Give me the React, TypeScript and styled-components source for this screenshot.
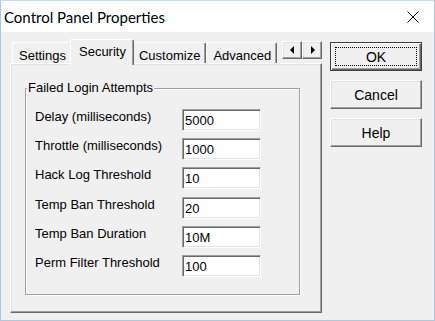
import React from 'react';
import styled, { createGlobalStyle } from 'styled-components';

const GlobalStyle = createGlobalStyle`
  html, body {
    margin: 0;
    padding: 0;
    background: #f0f0f0;
  }
  * {
    box-sizing: border-box;
  }
`;

const Window = styled.div`
  width: 435px;
  height: 321px;
  border: 1px solid #a6caec;
  border-top-color: #c9dcee;
  background: #f0f0f0;
  display: flex;
  flex-direction: column;
  font-family: 'Liberation Sans', Arial, sans-serif;
  color: #000;
`;

const TitleBar = styled.div`
  height: 31px;
  flex-shrink: 0;
  background: #fff;
  display: flex;
  align-items: center;
  justify-content: space-between;
  padding: 0 15px 0 3px;
`;

const Title = styled.span`
  font-family: Lato, 'Noto Sans', sans-serif;
  font-size: 15px;
  line-height: 20px;
  margin-top: 1px;
`;

const CloseButton = styled.span`
  display: flex;
  width: 12px;
  height: 12px;
  margin-top: 1px;
`;

const Body = styled.div`
  display: flex;
  padding: 7px 0 0 9px;
  gap: 8px;
`;

const TabControl = styled.div`
  width: 312px;
  display: flex;
  flex-direction: column;
`;

const TabStrip = styled.div`
  height: 24px;
  display: flex;
  position: relative;
  z-index: 1;
`;

const TabList = styled.div`
  flex: 1;
  height: 26px;
  display: flex;
  align-items: flex-start;
  padding-left: 2px;
  overflow: hidden;
`;

const Tab = styled.div<{ $active?: boolean }>`
  flex-shrink: 0;
  position: relative;
  height: ${(p) => (p.$active ? '26px' : '21px')};
  margin: ${(p) => (p.$active ? '0 -2px' : '3px 0 0')};
  z-index: ${(p) => (p.$active ? 2 : 1)};
  padding: ${(p) => (p.$active ? '4px 7px 0 8px' : '5px 5px 0 6px')};
  background: #f0f0f0;
  border-left: 1px solid #fff;
  border-top: 1px solid #fff;
  border-right: 1px solid #696969;
  box-shadow: inset -1px 0 0 #a0a0a0;
  border-top-left-radius: 2px;
  border-top-right-radius: 2px;
  font-size: 13px;
  line-height: 15px;
  white-space: nowrap;
`;

const Spinner = styled.div`
  display: flex;
  margin-top: 2px;
  height: 18px;
`;

const SpinButton = styled.div`
  width: 20px;
  height: 18px;
  display: flex;
  align-items: center;
  justify-content: center;
  background: #f0f0f0;
  border: 1px solid;
  border-color: #fff #696969 #696969 #fff;
  box-shadow: inset -1px -1px 0 #a0a0a0, inset 1px 1px 0 #e3e3e3;
`;

const Pane = styled.div`
  height: 250px;
  border: 1px solid;
  border-color: #fff #696969 #696969 #fff;
  box-shadow: inset -1px -1px 0 #a0a0a0, inset 1px 1px 0 #e3e3e3;
  padding: 24px 0 0 14px;
`;

const GroupBox = styled.div`
  position: relative;
  width: 275px;
  height: 207px;
  border: 1px solid #a0a0a0;
  box-shadow: inset 1px 1px 0 #fff, 1px 1px 0 #fff;
  padding: 20px 0 0 9px;
`;

const Legend = styled.span`
  position: absolute;
  top: -9px;
  left: 1px;
  padding: 0 1px;
  background: #f0f0f0;
  font-size: 13px;
  line-height: 16px;
`;

const FieldGrid = styled.div`
  display: grid;
  grid-template-columns: 147px 79px;
  grid-auto-rows: 22px;
  row-gap: 7.2px;
`;

const Label = styled.span`
  font-size: 13px;
  line-height: 16px;
  white-space: nowrap;
`;

const TextBox = styled.div`
  height: 22px;
  background: #fff;
  border: 1px solid;
  border-color: #a0a0a0 #fff #fff #a0a0a0;
  box-shadow: inset 1px 1px 0 #696969, inset -1px -1px 0 #e3e3e3;
  padding: 0 0 0 2px;
  font-size: 13px;
  line-height: 21px;
`;

const ButtonColumn = styled.div`
  display: flex;
  flex-direction: column;
  gap: 9px;
  padding-top: 3px;
`;

const Button = styled.div<{ $default?: boolean }>`
  position: relative;
  width: 92px;
  height: 29px;
  display: flex;
  align-items: center;
  justify-content: center;
  font-size: 14px;
  background: #f0f0f0;
  border: 1px solid;
  border-color: ${(p) => (p.$default ? '#3c3c3c' : '#fff #696969 #696969 #fff')};
  box-shadow: ${(p) =>
    p.$default
      ? 'inset 1px 1px 0 #fff, inset -1px -1px 0 #696969, inset -2px -2px 0 #a0a0a0'
      : 'inset -1px -1px 0 #a0a0a0, inset 1px 1px 0 #e3e3e3'};
`;

const FocusRing = styled.span`
  position: absolute;
  inset: 4px;
  border: 1px dotted #000;
`;

const fields = [
  ['Delay (milliseconds)', '5000'],
  ['Throttle (milliseconds)', '1000'],
  ['Hack Log Threshold', '10'],
  ['Temp Ban Threshold', '20'],
  ['Temp Ban Duration', '10M'],
  ['Perm Filter Threshold', '100'],
];

const App: React.FC = () => {
  return (
    <>
      <GlobalStyle />
      <Window>
        <TitleBar>
          <Title>Control Panel Properties</Title>
          <CloseButton>
            <svg width="12" height="12" viewBox="0 0 12 12">
              <path d="M0.5 0.5L11.5 11.5M11.5 0.5L0.5 11.5" stroke="#000" strokeWidth="1" />
            </svg>
          </CloseButton>
        </TitleBar>
        <Body>
          <TabControl>
            <TabStrip>
              <TabList>
                <Tab>Settings</Tab>
                <Tab $active>Security</Tab>
                <Tab>Customize</Tab>
                <Tab>Advanced</Tab>
              </TabList>
              <Spinner>
                <SpinButton>
                  <svg width="5" height="8" viewBox="0 0 5 8">
                    <path d="M4 0V8L0 4Z" fill="#000" />
                  </svg>
                </SpinButton>
                <SpinButton>
                  <svg width="5" height="8" viewBox="0 0 5 8">
                    <path d="M1 0V8L5 4Z" fill="#000" />
                  </svg>
                </SpinButton>
              </Spinner>
            </TabStrip>
            <Pane>
              <GroupBox>
                <Legend>Failed Login Attempts</Legend>
                <FieldGrid>
                  {fields.map(([label, value]) => (
                    <React.Fragment key={label}>
                      <Label>{label}</Label>
                      <TextBox>{value}</TextBox>
                    </React.Fragment>
                  ))}
                </FieldGrid>
              </GroupBox>
            </Pane>
          </TabControl>
          <ButtonColumn>
            <Button $default>
              OK
              <FocusRing />
            </Button>
            <Button>Cancel</Button>
            <Button>Help</Button>
          </ButtonColumn>
        </Body>
      </Window>
    </>
  );
};

export default App;
